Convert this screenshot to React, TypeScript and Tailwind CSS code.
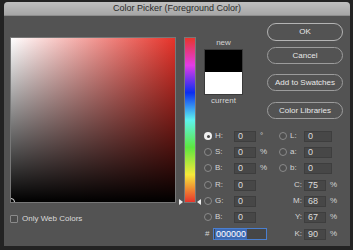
import React from "react";

const font = "font-['Liberation_Sans',Arial,sans-serif]";

function Radio({ on }: { on?: boolean }) {
  return on ? (
    <div className="w-[8px] h-[8px] rounded-full bg-[#f0f0f0] flex items-center justify-center shrink-0">
      <div className="w-[3px] h-[3px] rounded-full bg-[#4a4a4a]" />
    </div>
  ) : (
    <div className="w-[8px] h-[8px] rounded-full border border-[#8a8a8a] bg-[#4f4f4f] shrink-0" />
  );
}

function Input({ value, w }: { value: string; w: string }) {
  return (
    <div
      className={`${w} h-[11px] bg-[#474747] border border-[#3e3e3e] text-[9px] leading-[9px] text-[#dcdcdc] pl-[3px] flex items-center`}
    >
      {value}
    </div>
  );
}

function LeftRadioField({ label, unit, on }: { label: string; unit?: string; on?: boolean }) {
  return (
    <div className="w-[75px] flex items-center">
      <Radio on={on} />
      <div className="ml-[3px] w-[19px] text-[8px] text-[#d4d4d4]">{label}</div>
      <Input value="0" w="w-[22px]" />
      {unit && <div className="ml-[4px] text-[8px] text-[#d4d4d4]">{unit}</div>}
    </div>
  );
}

function RightRadioField({ label }: { label: string }) {
  return (
    <div className="flex items-center">
      <Radio />
      <div className="ml-[3px] w-[14px] text-[8px] text-[#d4d4d4]">{label}</div>
      <Input value="0" w="w-[28px]" />
    </div>
  );
}

function CmykField({ label, value }: { label: string; value: string }) {
  return (
    <div className="flex items-center">
      <div className="w-[23px] text-right text-[8px] text-[#d4d4d4]">{label}</div>
      <div className="ml-[2px]">
        <Input value={value} w="w-[22px]" />
      </div>
      <div className="ml-[4px] text-[8px] text-[#d4d4d4]">%</div>
    </div>
  );
}

function Btn({ children, cls }: { children: React.ReactNode; cls: string }) {
  return (
    <div
      className={`${cls} w-[76px] rounded-full border border-[#9c9c9c] flex items-center justify-center text-[8px] text-[#e8e8e8]`}
    >
      {children}
    </div>
  );
}

export default function App() {
  return (
    <div className={`w-[353px] h-[250px] bg-[#232323] pt-[2px] pl-[4px] ${font}`}>
      <div className="w-[346px] h-[244px] bg-[#535353] rounded-t-[4px] overflow-hidden flex flex-col">
        <div className="h-[14px] shrink-0 bg-[linear-gradient(to_bottom,#c0c0c0,#a6a6a6)] border-b border-[#8e8e8e] flex items-center justify-center text-[9px] text-[#2a2a2a]">
          Color Picker (Foreground Color)
        </div>
        <div className="flex flex-1">
          {/* left column */}
          <div className="pl-[6px] pt-[21px] flex flex-col">
            <div className="relative w-[166px] h-[166px] border border-[#777] bg-[linear-gradient(to_right,#ffffff,#e6332a)] overflow-hidden">
              <div className="absolute inset-0 bg-[linear-gradient(to_bottom,rgba(0,0,0,0),#000)]" />
              <div className="absolute left-[-4px] bottom-[-4px] w-[8px] h-[8px] rounded-full border border-[#e0e0e0]" />
            </div>
            <div className="mt-[10px] flex items-center">
              <div className="w-[8px] h-[8px] border border-[#8a8a8a] bg-[#4c4c4c] rounded-[1px]" />
              <div className="ml-[4px] text-[8px] text-[#dadada]">Only Web Colors</div>
            </div>
          </div>
          {/* hue slider */}
          <div className="ml-[8px] pt-[21px]">
            <div className="relative w-[12px] h-[166px] border border-[#777] bg-[linear-gradient(to_bottom,#e8352c,#e33ce6_16.67%,#0b2ef2_33.33%,#5ef2ee_50%,#5de640_66.67%,#f6e93a_83.33%,#e8352c)]">
              <div className="absolute left-[-6px] bottom-[-3px] w-0 h-0 border-y-[3px] border-y-transparent border-l-[4px] border-l-[#eeeeee]" />
              <div className="absolute right-[-6px] bottom-[-3px] w-0 h-0 border-y-[3px] border-y-transparent border-r-[4px] border-r-[#eeeeee]" />
            </div>
          </div>
          {/* right area */}
          <div className="ml-[8px] pt-[7px] flex flex-col">
            <div className="h-[105px] flex">
              <div className="mt-[14px] w-[39px] flex flex-col items-center">
                <div className="h-[12px] leading-[12px] text-[8px] text-[#d4d4d4]">new</div>
                <div className="w-[39px] border border-[#3a3a3a]">
                  <div className="h-[22px] bg-black" />
                  <div className="h-[22px] bg-white" />
                </div>
                <div className="h-[12px] leading-[12px] text-[8px] text-[#d4d4d4]">current</div>
              </div>
              <div className="ml-[24px] flex flex-col">
                <Btn cls="h-[18px] border-[#b4b4b4]">OK</Btn>
                <Btn cls="mt-[6px] h-[17px]">Cancel</Btn>
                <Btn cls="mt-[10px] h-[17px]">Add to Swatches</Btn>
                <Btn cls="mt-[11px] h-[17px]">Color Libraries</Btn>
              </div>
            </div>
            <div className="flex flex-col">
              <div className="h-[16px] flex items-center">
                <LeftRadioField label="H:" unit="°" on />
                <RightRadioField label="L:" />
              </div>
              <div className="h-[16px] flex items-center">
                <LeftRadioField label="S:" unit="%" />
                <RightRadioField label="a:" />
              </div>
              <div className="h-[16px] flex items-center">
                <LeftRadioField label="B:" unit="%" />
                <RightRadioField label="b:" />
              </div>
              <div className="h-[16px] mt-[1px] flex items-center">
                <LeftRadioField label="R:" />
                <CmykField label="C:" value="75" />
              </div>
              <div className="h-[16px] flex items-center">
                <LeftRadioField label="G:" />
                <CmykField label="M:" value="68" />
              </div>
              <div className="h-[16px] flex items-center">
                <LeftRadioField label="B:" />
                <CmykField label="Y:" value="67" />
              </div>
              <div className="h-[18px] flex items-center">
                <div className="w-[75px] flex items-center">
                  <div className="w-[9px] pl-[1px] text-[8px] text-[#d4d4d4]">#</div>
                  <div className="w-[54px] h-[12px] border border-[#4a7fd0] bg-[#464646] flex items-center pl-[1px]">
                    <span className="bg-[#3d69b3] text-white text-[9px] leading-[10px] px-[1px]">000000</span>
                  </div>
                </div>
                <CmykField label="K:" value="90" />
              </div>
            </div>
          </div>
        </div>
      </div>
    </div>
  );
}
